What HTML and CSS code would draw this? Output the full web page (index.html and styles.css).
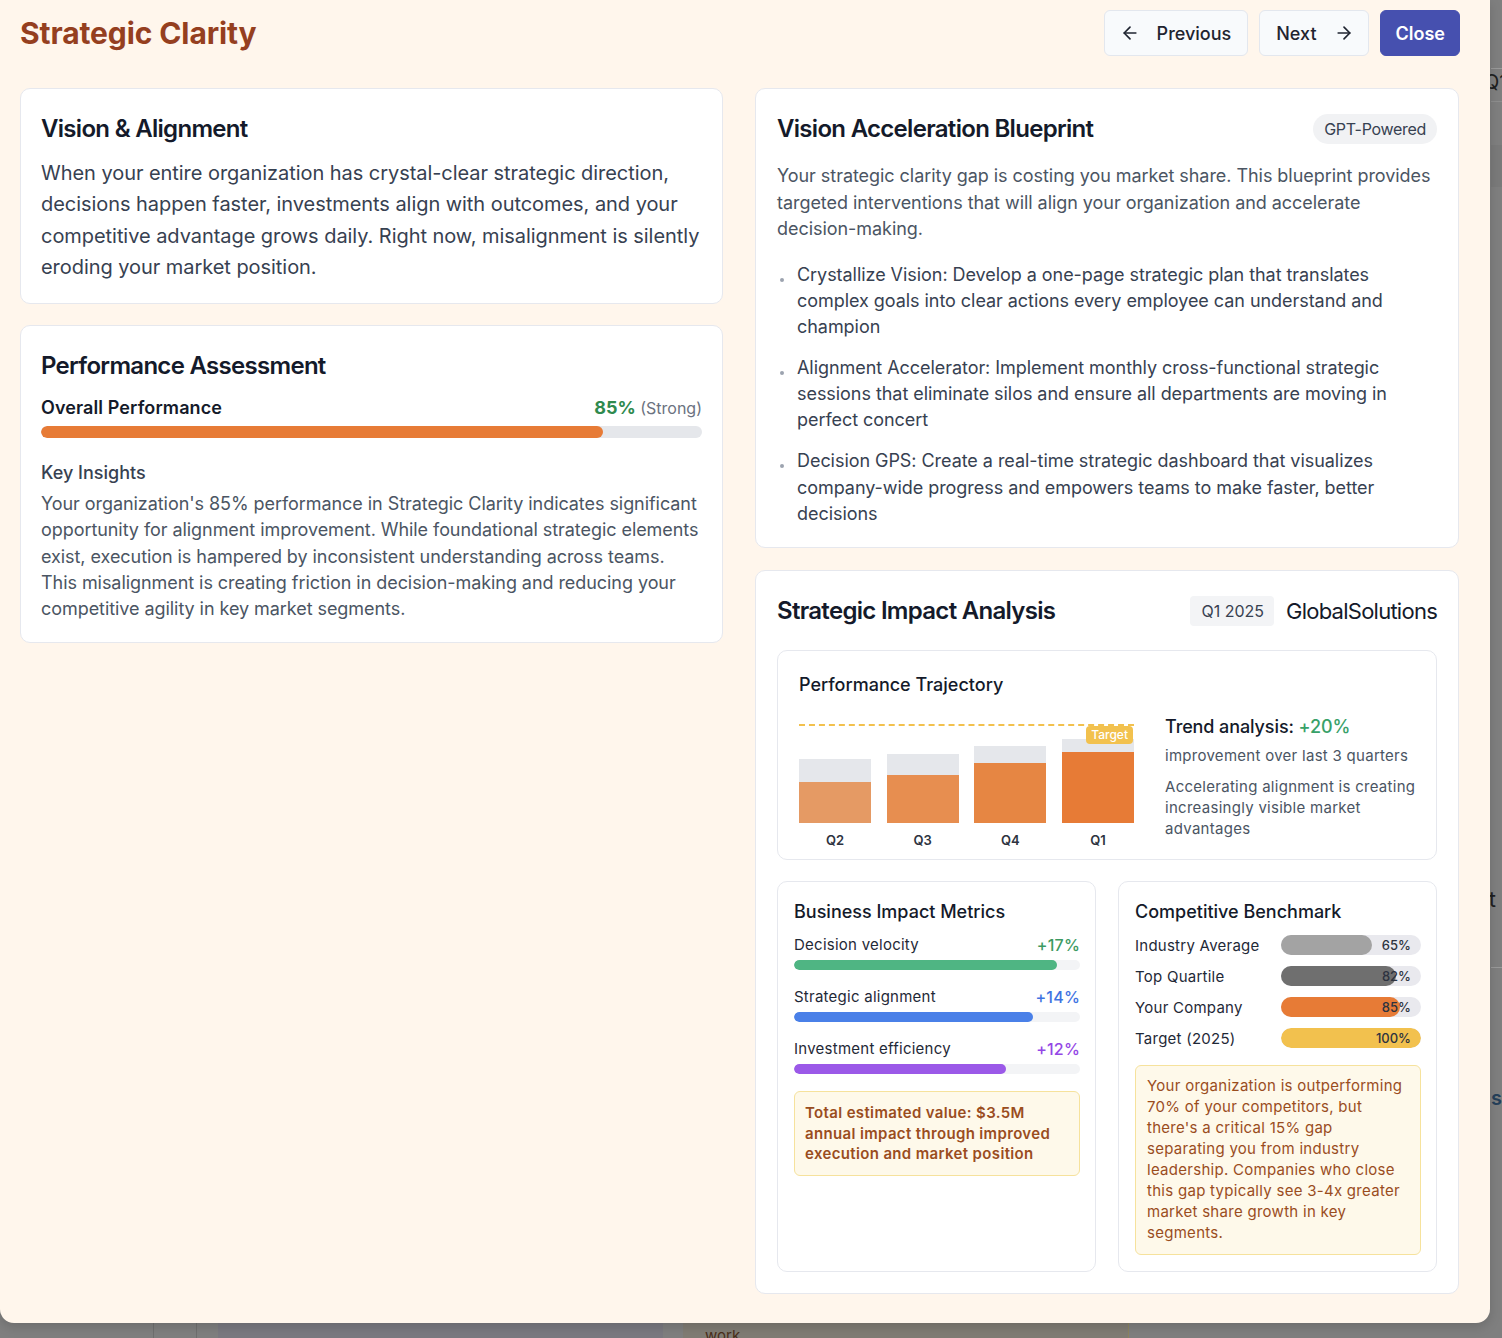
FILE: index.html
```html
<!DOCTYPE html>
<html lang="en">
<head>
<meta charset="utf-8">
<title>Strategic Clarity</title>
<link rel="stylesheet" href="styles.css">
</head>
<body>
<div class="backdrop">
  <div class="bg-frag bg-q1">Q1</div>
  <div class="bg-frag bg-line l1"></div>
  <div class="bg-frag bg-line l2"></div>
  <div class="bg-frag bg-dark d1"></div>
  <div class="bg-frag bg-t">rt</div>
  <div class="bg-frag bg-line l3"></div>
  <div class="bg-frag bg-s">s</div>
  <div class="bg-frag bg-bottom b1"></div>
  <div class="bg-frag bg-bottom b2"></div>
  <div class="bg-frag bg-bottom b3"><span>work</span></div>
</div>

<div class="modal">
  <header class="modal-head">
    <h1 class="title">Strategic Clarity</h1>
    <div class="actions">
      <button class="btn btn-prev">
        <svg width="20" height="20" viewBox="0 0 24 24" fill="none" stroke="currentColor" stroke-width="2" stroke-linecap="round" stroke-linejoin="round"><path d="M19 12H5"/><path d="M12 19l-7-7 7-7"/></svg>
        <span>Previous</span>
      </button>
      <button class="btn btn-next">
        <span>Next</span>
        <svg width="20" height="20" viewBox="0 0 24 24" fill="none" stroke="currentColor" stroke-width="2" stroke-linecap="round" stroke-linejoin="round"><path d="M5 12h14"/><path d="M12 5l7 7-7 7"/></svg>
      </button>
      <button class="btn btn-primary">Close</button>
    </div>
  </header>

  <div class="columns">
    <div class="col">
      <section class="card card-left">
        <h2 class="card-title">Vision &amp; Alignment</h2>
        <p class="lead">When your entire organization has crystal-clear strategic direction, decisions happen faster, investments align with outcomes, and your competitive advantage grows daily. Right now, misalignment is silently eroding your market position.</p>
      </section>

      <section class="card card-left card-perf">
        <h2 class="card-title">Performance Assessment</h2>
        <div class="perf-row">
          <span class="perf-label">Overall Performance</span>
          <span class="perf-score"><b>85%</b> <small>(Strong)</small></span>
        </div>
        <div class="track"><div class="fill" style="width:85%"></div></div>
        <h3 class="sub">Key Insights</h3>
        <p class="body">Your organization's 85% performance in Strategic Clarity indicates significant opportunity for alignment improvement. While foundational strategic elements exist, execution is hampered by inconsistent understanding across teams. This misalignment is creating friction in decision-making and reducing your competitive agility in key market segments.</p>
      </section>
    </div>

    <div class="col">
      <section class="card">
        <div class="card-head">
          <h2 class="card-title">Vision Acceleration Blueprint</h2>
          <span class="pill">GPT-Powered</span>
        </div>
        <p class="body blue-body">Your strategic clarity gap is costing you market share. This blueprint provides targeted interventions that will align your organization and accelerate decision-making.</p>
        <ul class="bullets">
          <li>Crystallize Vision: Develop a one-page strategic plan that translates complex goals into clear actions every employee can understand and champion</li>
          <li>Alignment Accelerator: Implement monthly cross-functional strategic sessions that eliminate silos and ensure all departments are moving in perfect concert</li>
          <li>Decision GPS: Create a real-time strategic dashboard that visualizes company-wide progress and empowers teams to make faster, better decisions</li>
        </ul>
      </section>

      <section class="card card-impact">
        <div class="card-head">
          <h2 class="card-title">Strategic Impact Analysis</h2>
          <div class="head-meta">
            <span class="tag">Q1 2025</span>
            <span class="company">GlobalSolutions</span>
          </div>
        </div>

        <div class="inner traj">
          <h3 class="inner-title">Performance Trajectory</h3>
          <div class="traj-body">
            <div class="chart">
              <div class="bars">
                <div class="target-line"></div>
                <span class="target-tag">Target</span>
                <div class="bar-col"><div class="bar" style="height:64px"><div class="bar-fill q2" style="height:41px"></div></div><span class="q">Q2</span></div>
                <div class="bar-col"><div class="bar" style="height:69px"><div class="bar-fill q3" style="height:48px"></div></div><span class="q">Q3</span></div>
                <div class="bar-col"><div class="bar" style="height:77px"><div class="bar-fill q4" style="height:60px"></div></div><span class="q">Q4</span></div>
                <div class="bar-col"><div class="bar" style="height:84px"><div class="bar-fill q1" style="height:71px"></div></div><span class="q">Q1</span></div>
              </div>
            </div>
            <div class="trend">
              <p class="trend-title">Trend analysis: <span class="up">+20%</span></p>
              <p class="trend-sub">improvement over last 3 quarters</p>
              <p class="trend-note">Accelerating alignment is creating increasingly visible market advantages</p>
            </div>
          </div>
        </div>

        <div class="pair">
          <div class="inner small">
            <h3 class="inner-title">Business Impact Metrics</h3>
            <div class="metric">
              <div class="metric-row"><span>Decision velocity</span><span class="v green">+17%</span></div>
              <div class="mtrack"><div class="mfill green-bg" style="width:92%"></div></div>
            </div>
            <div class="metric">
              <div class="metric-row"><span>Strategic alignment</span><span class="v blue">+14%</span></div>
              <div class="mtrack"><div class="mfill blue-bg" style="width:83.5%"></div></div>
            </div>
            <div class="metric">
              <div class="metric-row"><span>Investment efficiency</span><span class="v purple">+12%</span></div>
              <div class="mtrack"><div class="mfill purple-bg" style="width:74%"></div></div>
            </div>
            <div class="note note-strong">Total estimated value: $3.5M annual impact through improved execution and market position</div>
          </div>

          <div class="inner small">
            <h3 class="inner-title">Competitive Benchmark</h3>
            <div class="bench">
              <div class="bench-row"><span class="bench-label">Industry Average</span><div class="btrack"><div class="bfill gray1" style="width:65%"></div><span class="bval">65%</span></div></div>
              <div class="bench-row"><span class="bench-label">Top Quartile</span><div class="btrack"><div class="bfill gray2" style="width:82%"></div><span class="bval">82%</span></div></div>
              <div class="bench-row"><span class="bench-label">Your Company</span><div class="btrack"><div class="bfill orange" style="width:85%"></div><span class="bval">85%</span></div></div>
              <div class="bench-row"><span class="bench-label">Target (2025)</span><div class="btrack"><div class="bfill yellow" style="width:100%"></div><span class="bval">100%</span></div></div>
            </div>
            <div class="note">Your organization is outperforming 70% of your competitors, but there's a critical 15% gap separating you from industry leadership. Companies who close this gap typically see 3-4x greater market share growth in key segments.</div>
          </div>
        </div>
      </section>
    </div>
  </div>
</div>
</body>
</html>
```

FILE: styles.css
```css
* { box-sizing: border-box; }
html, body { margin: 0; padding: 0; }
body {
  width: 1502px;
  height: 1338px;
  overflow: hidden;
  background: #7f7f7f;
  font-family: Inter, "Noto Sans", "Liberation Sans", sans-serif;
  color: #1f2937;
  position: relative;
}
h1, h2, h3, p, ul { margin: 0; }

/* underlying page, seen through the dim overlay */
.backdrop { position: absolute; inset: 0; }
.bg-frag { position: absolute; }
.bg-q1 { left: 1484px; top: 70px; font-size: 20px; color: #1e1e1e; }
.bg-line { left: 1491px; width: 11px; height: 1px; background: #9a9a9a; }
.l1 { top: 68px; }
.l2 { top: 101px; background: #8e8e8e; }
.l3 { top: 967px; }
.bg-dark { left: 1491px; width: 11px; }
.d1 { top: 145px; height: 42px; background: #7a7a7a; }
.bg-t { left: 1480px; top: 886px; font-size: 22px; color: #1e1e1e; }
.bg-s { left: 1491px; top: 1086px; font-size: 20px; font-weight: 600; color: #25405a; }
.bg-bottom { top: 1323px; height: 15px; }
.b1 { left: 153px; width: 44px; border-left: 1px solid #6f6f6f; border-right: 1px solid #6f6f6f; }
.b2 { left: 218px; width: 445px; background: #7a7980; }
.b3 { left: 683px; width: 446px; background: #807c74; border-right: 1px solid #8c8460; overflow: hidden; }
.b3 span { position: absolute; left: 22px; top: 3px; font-size: 15px; color: #4a2e1a; }

/* modal */
.modal {
  position: relative;
  width: 1490px;
  height: 1323px;
  background: #fff6ec;
  border-radius: 0 0 14px 14px;
  padding: 10px 31px 0 20px;
  box-shadow: 0 4px 12px rgba(0,0,0,0.15);
}
.modal-head {
  display: flex;
  justify-content: space-between;
  align-items: center;
  height: 46px;
  margin-right: -1px;
}
.title {
  font-size: 30px;
  font-weight: 700;
  color: #953f1f;
  letter-spacing: -0.1px;
}
.actions { display: flex; gap: 11px; }
.btn {
  height: 46px;
  display: flex;
  align-items: center;
  gap: 17px;
  border: 1px solid #e3e7ee;
  background: #f8fafc;
  border-radius: 6px;
  font-family: inherit;
  font-size: 18px;
  font-weight: 500;
  color: #1f2430;
}
.btn-prev { padding: 0 16px 0 15px; }
.btn-next { padding: 0 14px 0 16px; }
.btn-primary {
  background: #4650af;
  border-color: #4650af;
  color: #fff;
  padding: 0 14px 0 15px;
  font-weight: 600;
}

.columns {
  display: grid;
  grid-template-columns: 703px 704px;
  column-gap: 32px;
  margin-top: 32px;
  align-items: start;
}
.col { display: flex; flex-direction: column; gap: 22px; }
.col:first-child { gap: 21px; }

.card {
  background: #fff;
  border: 1px solid #e6e8ee;
  border-radius: 10px;
  padding: 24px 21px 20px;
}
.card-left { padding-left: 20px; padding-right: 20px; }
.card-title {
  font-size: 24px;
  line-height: 32px;
  font-weight: 600;
  color: #141a2a;
  letter-spacing: -0.7px;
}
.lead {
  margin-top: 13px;
  font-size: 20px;
  line-height: 31.3px;
  color: #374151;
  letter-spacing: -0.05px;
}

.card-perf { padding-top: 24px; padding-bottom: 19px; }
.perf-row {
  margin-top: 13px;
  display: flex;
  justify-content: space-between;
  align-items: baseline;
  line-height: 26px;
}
.perf-label { font-size: 18px; font-weight: 600; color: #141a2a; letter-spacing: 0.1px; }
.perf-score b { font-size: 18px; font-weight: 700; color: #2f8a4e; }
.perf-score small { font-size: 16px; color: #6b7280; }
.track {
  margin-top: 5px;
  height: 12px;
  border-radius: 6px;
  background: #e5e7eb;
  overflow: hidden;
}
.fill { height: 100%; background: #e77b36; border-radius: 6px; }
.sub {
  margin-top: 22px;
  font-size: 18px;
  line-height: 26px;
  font-weight: 500;
  color: #374151;
}
.body {
  margin-top: 5px;
  font-size: 18px;
  line-height: 26.3px;
  color: #4b5563;
  letter-spacing: -0.06px;
}

.card-head {
  display: flex;
  justify-content: space-between;
  align-items: center;
}
.pill {
  background: #f1f2f4;
  border-radius: 15px;
  padding: 0 11px;
  height: 30px;
  line-height: 30px;
  font-size: 16px;
  color: #374151;
  letter-spacing: -0.3px;
}
.blue-body { margin-top: 18px; line-height: 26.5px; letter-spacing: -0.05px; }
.bullets {
  list-style: none;
  padding: 0;
  margin-top: 19px;
  display: flex;
  flex-direction: column;
  gap: 14.5px;
}
.bullets li {
  position: relative;
  padding-left: 20px;
  font-size: 18px;
  line-height: 26.3px;
  color: #374151;
  letter-spacing: -0.05px;
}
.bullets li::before {
  content: "";
  position: absolute;
  left: 3px;
  top: 16px;
  width: 4px;
  height: 4px;
  border-radius: 50%;
  background: #9ca3af;
}

.card-impact { padding-top: 24px; padding-bottom: 21px; }
.head-meta { display: flex; align-items: center; gap: 12px; }
.tag {
  background: #f3f4f6;
  border-radius: 4px;
  height: 30px;
  line-height: 30px;
  padding: 0 10px 0 11px;
  font-size: 16px;
  color: #374151;
}
.company { font-size: 22px; font-weight: 400; color: #141a2a; letter-spacing: -0.75px; }

.inner {
  border: 1px solid #e6e8ee;
  border-radius: 10px;
  background: #fff;
}
.traj { margin-top: 23px; padding: 21px 19px 10px 21px; }
.inner-title {
  font-size: 18px;
  line-height: 26px;
  font-weight: 500;
  color: #141a2a;
}
.traj-body { display: flex; gap: 31px; margin-top: 16px; }
.chart { width: 335px; flex: none; }
.bars {
  position: relative;
  height: 135px;
  display: flex;
  justify-content: space-between;
  align-items: flex-end;
}
.target-line {
  position: absolute;
  left: 0; right: 0;
  top: 10px;
  border-top: 2px dashed #f2c14e;
}
.target-tag {
  position: absolute;
  right: 1px;
  top: 12px;
  background: #f2c14e;
  color: #fff;
  font-size: 12px;
  font-weight: 500;
  line-height: 18px;
  padding: 0 5px;
  border-radius: 4px;
  z-index: 1;
}
.bar-col { width: 72px; display: flex; flex-direction: column; align-items: center; }
.bar {
  width: 72px;
  background: #e5e7eb;
  display: flex;
  align-items: flex-end;
}
.bar-fill { width: 100%; }
.q2 { background: #e59a64; }
.q3 { background: #e78e50; }
.q4 { background: #e68643; }
.q1 { background: #e77b36; }
.q {
  margin-top: 8px;
  font-size: 13px;
  line-height: 18px;
  font-weight: 600;
  color: #2d3340;
}
.trend { flex: 1; padding-top: 1px; }
.trend-title { font-size: 18px; line-height: 24px; font-weight: 500; color: #141a2a; letter-spacing: -0.1px; }
.up { color: #38a169; }
.trend-sub { margin-top: 7px; font-size: 15px; line-height: 20px; color: #4b5563; letter-spacing: 0.28px; }
.trend-note { margin-top: 10px; font-size: 15px; line-height: 21px; color: #4b5563; letter-spacing: 0.28px; }

.pair {
  margin-top: 21px;
  display: grid;
  grid-template-columns: 1fr 1fr;
  gap: 22px;
}
.small { padding: 17px 15px 16px 16px; min-height: 389px; }
.metric { margin-top: 10px; }
.metric + .metric { margin-top: 17px; }
.metric-row {
  display: flex;
  justify-content: space-between;
  align-items: center;
  height: 20px;
  font-size: 15px;
  line-height: 20px;
  color: #1f2937;
  letter-spacing: 0.25px;
}
.v { font-weight: 500; font-size: 16px; line-height: 20px; letter-spacing: 0.2px; }
.green { color: #3c9a62; }
.blue { color: #3f73e2; }
.purple { color: #9447e6; }
.mtrack { margin-top: 5px; height: 10px; border-radius: 5px; background: #f3f4f6; overflow: hidden; }
.mfill { height: 100%; border-radius: 5px; }
.green-bg { background: #4fb583; }
.blue-bg { background: #4a80e8; }
.purple-bg { background: #9b59e8; }

.note {
  margin-top: 17px;
  background: #fef9ea;
  border: 1px solid #f6e29c;
  border-radius: 6px;
  padding: 10px 11px 11px;
  font-size: 15px;
  line-height: 20.9px;
  color: #9a4d1e;
  letter-spacing: 0.28px;
}
.note-strong { margin-top: 17px; font-weight: 600; padding: 11px 10px 10px; line-height: 20.5px; letter-spacing: 0.35px; }

.bench { margin-top: 10px; display: flex; flex-direction: column; gap: 11px; }
.bench-row { display: flex; align-items: center; height: 20px; }
.bench-label { width: 146px; flex: none; font-size: 15px; color: #1f2937; letter-spacing: 0.25px; }
.btrack {
  position: relative;
  flex: 1;
  height: 20px;
  border-radius: 10px;
  background: #e9e9ee;
  overflow: hidden;
}
.bfill { height: 100%; border-radius: 0 10px 10px 0; }
.gray1 { background: #a3a3a3; }
.gray2 { background: #6f6f6f; }
.orange { background: #e77b36; }
.yellow { background: #f2c14e; border-radius: 10px; }
.bval {
  position: absolute;
  right: 10px;
  top: 0;
  line-height: 20px;
  font-size: 13px;
  font-weight: 500;
  color: #2d3340;
}
```
